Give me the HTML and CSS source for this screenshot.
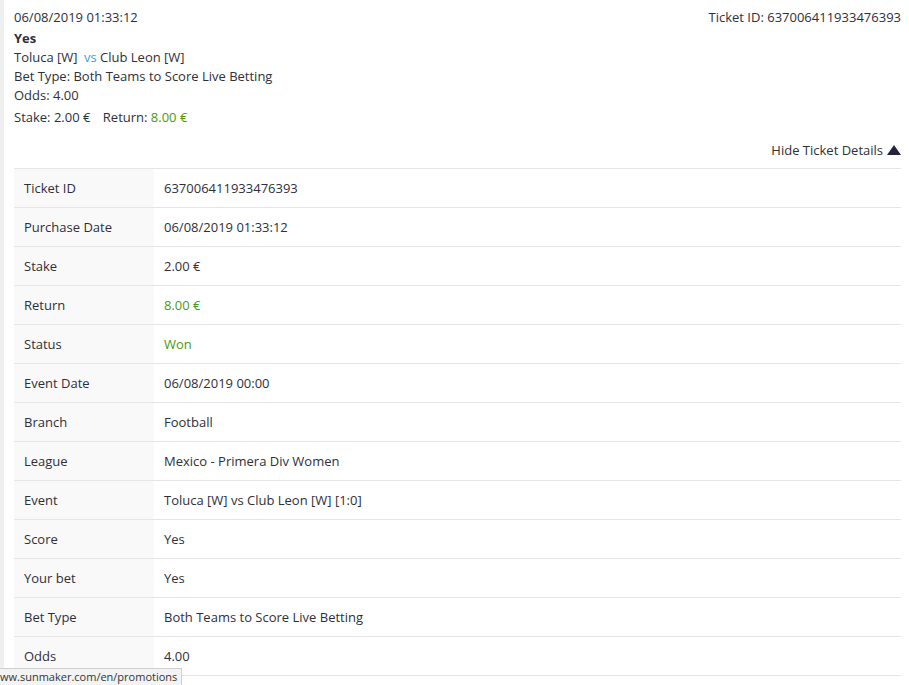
FILE: index.html
```html
<!DOCTYPE html>
<html lang="en">
<head>
  <meta charset="UTF-8" />
  <title>Ticket Details</title>
  <link rel="stylesheet" href="styles.css">
</head>
<body>
  <div class="ticket">
    <div class="summary">
      <div class="summary-head">
        <div class="line">06/08/2019 01:33:12</div>
        <div class="line">Ticket ID: 637006411933476393</div>
      </div>
      <div class="line pick">Yes</div>
      <div class="line">Toluca [W] <span class="vs">vs</span> Club Leon [W]</div>
      <div class="line">Bet Type: Both Teams to Score Live Betting</div>
      <div class="line">Odds: 4.00</div>
      <div class="line money">Stake: 2.00 € <span class="spacer"></span>Return: <span class="green">8.00 €</span></div>
    </div>

    <div class="toggle">
      Hide Ticket Details
      <svg width="14" height="10" viewBox="0 0 14 10"><polygon points="7,0 14,10 0,10" fill="#23233d"/></svg>
    </div>

    <table class="details">
      <tr><td class="label">Ticket ID</td><td>637006411933476393</td></tr>
      <tr><td class="label">Purchase Date</td><td>06/08/2019 01:33:12</td></tr>
      <tr><td class="label">Stake</td><td>2.00 €</td></tr>
      <tr><td class="label">Return</td><td class="green">8.00 €</td></tr>
      <tr><td class="label">Status</td><td class="green">Won</td></tr>
      <tr><td class="label">Event Date</td><td>06/08/2019 00:00</td></tr>
      <tr><td class="label">Branch</td><td>Football</td></tr>
      <tr><td class="label">League</td><td>Mexico - Primera Div Women</td></tr>
      <tr><td class="label">Event</td><td>Toluca [W] vs Club Leon [W] [1:0]</td></tr>
      <tr><td class="label">Score</td><td>Yes</td></tr>
      <tr><td class="label">Your bet</td><td>Yes</td></tr>
      <tr><td class="label">Bet Type</td><td>Both Teams to Score Live Betting</td></tr>
      <tr><td class="label">Odds</td><td>4.00</td></tr>
    </table>
  </div>

  <div class="statusbar">ww.sunmaker.com/en/promotions</div>
</body>
</html>
```
FILE: styles.css
```css
body {
  margin: 0;
  font-family: "Open Sans", sans-serif;
  font-size: 13px;
  color: #2f2f3a;
  background: #fff;
}
.ticket {
  border-left: 4px solid #efefef;
  padding: 8px 8px 40px 10px;
  min-height: 700px;
}
.line {
  line-height: 19px;
}
.summary-head {
  display: flex;
  justify-content: space-between;
}
.pick {
  font-weight: bold;
  margin-top: 2px;
}
.money {
  margin-top: 3px;
}
.spacer {
  display: inline-block;
  width: 9px;
}
.vs {
  color: #4a9ad6;
  margin-left: 3px;
}
.green {
  color: #4c9a0c;
}
.toggle {
  margin-top: 14px;
  line-height: 19px;
  display: flex;
  justify-content: flex-end;
  align-items: center;
  gap: 4px;
}
.toggle svg {
  margin-top: -1px;
}
.details {
  width: 100%;
  margin-top: 8px;
  border-collapse: collapse;
}
.details td {
  border-top: 1px solid #e6e6e6;
  height: 38px;
  padding: 0 10px;
  line-height: 19px;
}
.details tr:last-child td {
  border-bottom: 1px solid #e6e6e6;
}
.details td.label {
  width: 120px;
  background: #f9f9f9;
}
.statusbar {
  position: fixed;
  left: 0;
  bottom: 0;
  height: 16px;
  padding-right: 4px;
  background: #f3f3f3;
  border-top: 1px solid #cfcfcf;
  border-right: 1px solid #cfcfcf;
  font-size: 11px;
  line-height: 16px;
  white-space: nowrap;
  color: #333;
}
```
